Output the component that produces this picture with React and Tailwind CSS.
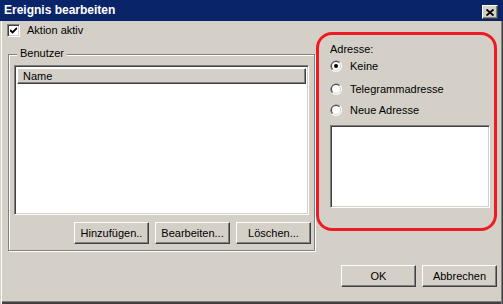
const raised =
  "bg-[#d4d0c8] border border-t-white border-l-white border-r-[#404040] border-b-[#404040] shadow-[inset_-1px_-1px_0_#808080]";
const sunken =
  "bg-white border border-t-[#808080] border-l-[#808080] border-r-white border-b-white shadow-[inset_1px_1px_0_#404040,inset_-1px_-1px_0_#d4d0c8]";

function Btn({ children }) {
  return (
    <div className={`w-[75px] h-[22px] flex items-center justify-center text-[11px] leading-[13px] text-black ${raised}`}>
      {children}
    </div>
  );
}

function Radio({ checked, label }) {
  return (
    <div className="flex items-center h-[14px] gap-[8px]">
      <svg width="12" height="12" viewBox="0 0 12 12">
        <circle cx="6" cy="6" r="6" fill="#ffffff" />
        <path d="M10.24 1.76 A6 6 0 0 0 1.76 10.24 Z" fill="#808080" />
        <circle cx="6" cy="6" r="5" fill="#d4d0c8" />
        <path d="M9.54 2.46 A5 5 0 0 0 2.46 9.54 Z" fill="#404040" />
        <circle cx="6" cy="6" r="4" fill="#ffffff" />
        {checked && <circle cx="6" cy="6" r="2" fill="#000000" />}
      </svg>
      <span className="text-[11px] leading-[13px] text-black">{label}</span>
    </div>
  );
}

export default function App() {
  return (
    <div className="w-[503px] h-[304px] bg-[#d4d0c8] flex flex-col overflow-hidden font-['Liberation_Sans',Arial,sans-serif] select-none">
      {/* Title bar */}
      <div className="h-[21px] bg-[#0a246a] flex items-start justify-between">
        <span className="pl-[4px] text-white font-bold text-[12px] leading-[21px]">Ereignis bearbeiten</span>
        <div className={`mt-[5px] mr-[5px] w-[16px] h-[14px] flex items-center justify-center ${raised}`}>
          <svg width="8" height="7" viewBox="0 0 8 7">
            <path d="M0.5 0.5 L7.5 6.5 M7.5 0.5 L0.5 6.5" stroke="#000" strokeWidth="1.8" />
          </svg>
        </div>
      </div>

      {/* Body */}
      <div className="flex-1 flex flex-col pr-[6px] shadow-[inset_1px_0_0_#d4d0c8,inset_2px_0_0_#ffffff,inset_-1px_0_0_#404040,inset_-2px_0_0_#808080,inset_0_-2px_0_#404040,inset_0_-3px_0_#808080]">
        <div className="flex items-start">
          {/* Left column */}
          <div className="w-[316px] pl-[7px] flex flex-col">
            <div className="mt-[3px] flex items-center gap-[7px] h-[13px]">
              <div className={`w-[13px] h-[13px] flex items-center justify-center ${sunken}`}>
                <svg width="7" height="7" viewBox="0 0 7 7">
                  <path d="M0 3 L2.5 5.5 L7 1" stroke="#000" strokeWidth="1.8" fill="none" />
                </svg>
              </div>
              <span className="text-[11px] leading-[13px] text-black">Aktion aktiv</span>
            </div>

            {/* Group box */}
            <div className="relative mt-[17px] ml-[1px] w-[307px] h-[197px] border border-[#808080] shadow-[inset_1px_1px_0_#ffffff,1px_1px_0_#ffffff] pl-[5px] pt-[10px] pr-[3px] flex flex-col">
              <span className="absolute left-[8px] top-[-8px] px-[3px] bg-[#d4d0c8] text-[11px] leading-[13px] text-black">
                Benutzer
              </span>
              <div className={`w-[295px] h-[150px] ${sunken} p-[2px] flex flex-col`}>
                <div className="h-[16px] flex items-center bg-[#d4d0c8] border-t border-l border-t-white border-l-white border-b border-r border-b-[#404040] border-r-[#404040] shadow-[inset_-1px_-1px_0_#808080] pl-[5px] text-[11px] leading-[13px] text-black">
                  Name
                </div>
              </div>
              <div className="mt-[7px] flex justify-end gap-[6px]">
                <Btn>Hinzufügen..</Btn>
                <Btn>Bearbeiten...</Btn>
                <Btn>Löschen...</Btn>
              </div>
            </div>
          </div>

          {/* Right column (highlighted) */}
          <div className="mt-[11px] ml-[1px] w-[183px] h-[199px] border-[3px] border-[#ed1c24] rounded-[16px] pl-[11px] pt-[8px] flex flex-col">
            <span className="text-[11px] leading-[13px] text-black">Adresse:</span>
            <div className="mt-[3px]">
              <Radio checked label="Keine" />
            </div>
            <div className="mt-[9px]">
              <Radio label="Telegrammadresse" />
            </div>
            <div className="mt-[7px]">
              <Radio label="Neue Adresse" />
            </div>
            <div className={`mt-[8px] w-[160px] h-[83px] ${sunken}`} />
          </div>
        </div>

        {/* Bottom buttons */}
        <div className="mt-[14px] flex justify-end gap-[6px]">
          <Btn>OK</Btn>
          <Btn>Abbrechen</Btn>
        </div>
      </div>
    </div>
  );
}
